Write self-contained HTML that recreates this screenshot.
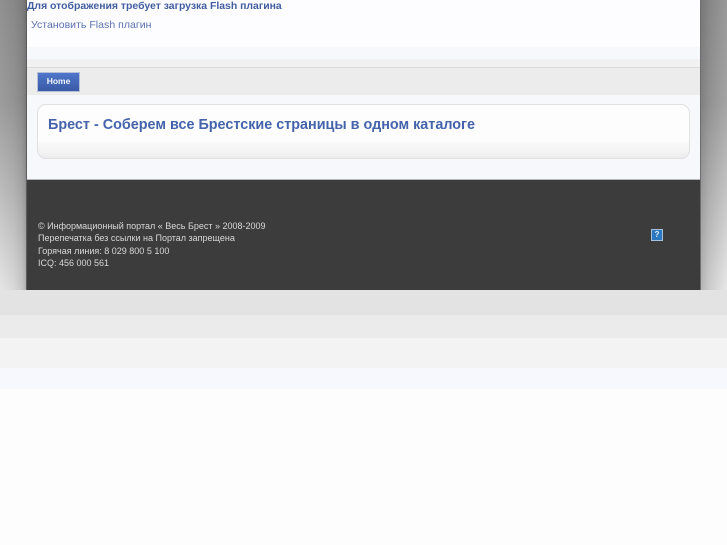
<!DOCTYPE html>
<html><head><meta charset="utf-8"><style>
html,body{margin:0;padding:0;width:727px;height:545px;overflow:hidden;background:#fdfdfd}
body{position:relative;font-family:"Liberation Sans",sans-serif}
div{position:absolute;box-sizing:border-box}
.t{white-space:nowrap}
</style></head><body>
<!-- side backgrounds -->
<div style="left:0;top:0;width:27px;height:290px;background:linear-gradient(90deg,rgba(0,0,0,0) 0,rgba(0,0,0,.06) 14px,rgba(0,0,0,.13) 22px,rgba(0,0,0,.25) 27px),linear-gradient(176deg,#909090 0,#9c9c9c 35%,#bcbcbc 65%,#e6e6e6 100%)"></div>
<div style="left:701px;top:0;width:26px;height:290px;background:linear-gradient(90deg,rgba(0,0,0,.22) 0,rgba(0,0,0,.12) 8px,rgba(0,0,0,.05) 18px,rgba(0,0,0,0) 26px),linear-gradient(184deg,#989898 0,#a4a4a4 35%,#c4c4c4 65%,#e8e8e8 100%)"></div>
<div style="left:26px;top:0;width:1px;height:290px;background:#5c5c5c"></div>
<div style="left:700px;top:0;width:1px;height:290px;background:#6e6e6e"></div>
<!-- main column -->
<div style="left:27px;top:0;width:673px;height:47px;background:#fdfdff"></div>
<div style="left:27px;top:47px;width:673px;height:12px;background:#f7f8fc"></div>
<div style="left:27px;top:59px;width:673px;height:8px;background:#f1f1f1"></div>
<div style="left:27px;top:67px;width:673px;height:1px;background:#dcdcdc"></div>
<div style="left:27px;top:68px;width:673px;height:27px;background:#ececec"></div>
<div style="left:27px;top:95px;width:673px;height:85px;background:#f7f8fc"></div>
<div class="t" style="left:27px;top:0;font-size:10.45px;line-height:14px;font-weight:bold;color:#425d a0;color:#425da0">Для отображения требует загрузка Flash плагина</div>
<div class="t" style="left:31px;top:19px;font-size:10.5px;line-height:13px;letter-spacing:.03px;color:#5a72ae">Установить Flash плагин</div>
<!-- Home button -->
<div class="t" style="left:37px;top:72px;width:43px;height:20px;border:1px solid #b4bfd8;background:linear-gradient(180deg,#4f76ca,#3a5aa6);color:#f2f4fa;font-size:8.5px;font-weight:bold;line-height:17px;text-align:center">Home</div>
<!-- title box -->
<div style="left:37px;top:104px;width:653px;height:55px;border:1px solid #e0e0e0;border-radius:9px;background:linear-gradient(180deg,#fdfdfe 0,#fdfdfe 70%,#f8f8fa 70%,#f5f5f6 84%,#ececec 100%)"></div>
<div class="t" style="left:48px;top:116px;font-size:14.38px;line-height:18px;font-weight:bold;color:#4463ab">Брест - Соберем все Брестские страницы в одном каталоге</div>
<!-- footer -->
<div style="left:27px;top:179px;width:673px;height:1px;background:#b8b8b8"></div>
<div style="left:27px;top:180px;width:673px;height:110px;background:#3c3c3c"></div>
<div class="t" style="left:38px;top:220px;font-size:9px;line-height:12.4px;letter-spacing:0;color:#d8d8d8">© Информационный портал « Весь Брест » 2008-2009<br>Перепечатка без ссылки на Портал запрещена<br>Горячая линия: 8 029 800 5 100<br>ICQ: 456 000 561</div>
<div style="left:651px;top:229px;width:12px;height:12px;border:1.5px solid #a9c3de;background:#2a78c0;color:#e8f2fb;font-size:8px;line-height:9px;font-weight:bold;text-align:center" class="t">?</div>
<!-- bottom bands -->
<div style="left:0;top:290px;width:727px;height:25px;background:#e3e3e3"></div>
<div style="left:0;top:315px;width:727px;height:23px;background:#ebebeb"></div>
<div style="left:0;top:338px;width:727px;height:30px;background:#f3f3f3"></div>
<div style="left:0;top:368px;width:727px;height:21px;background:#f7f8fd"></div>
</body></html>
